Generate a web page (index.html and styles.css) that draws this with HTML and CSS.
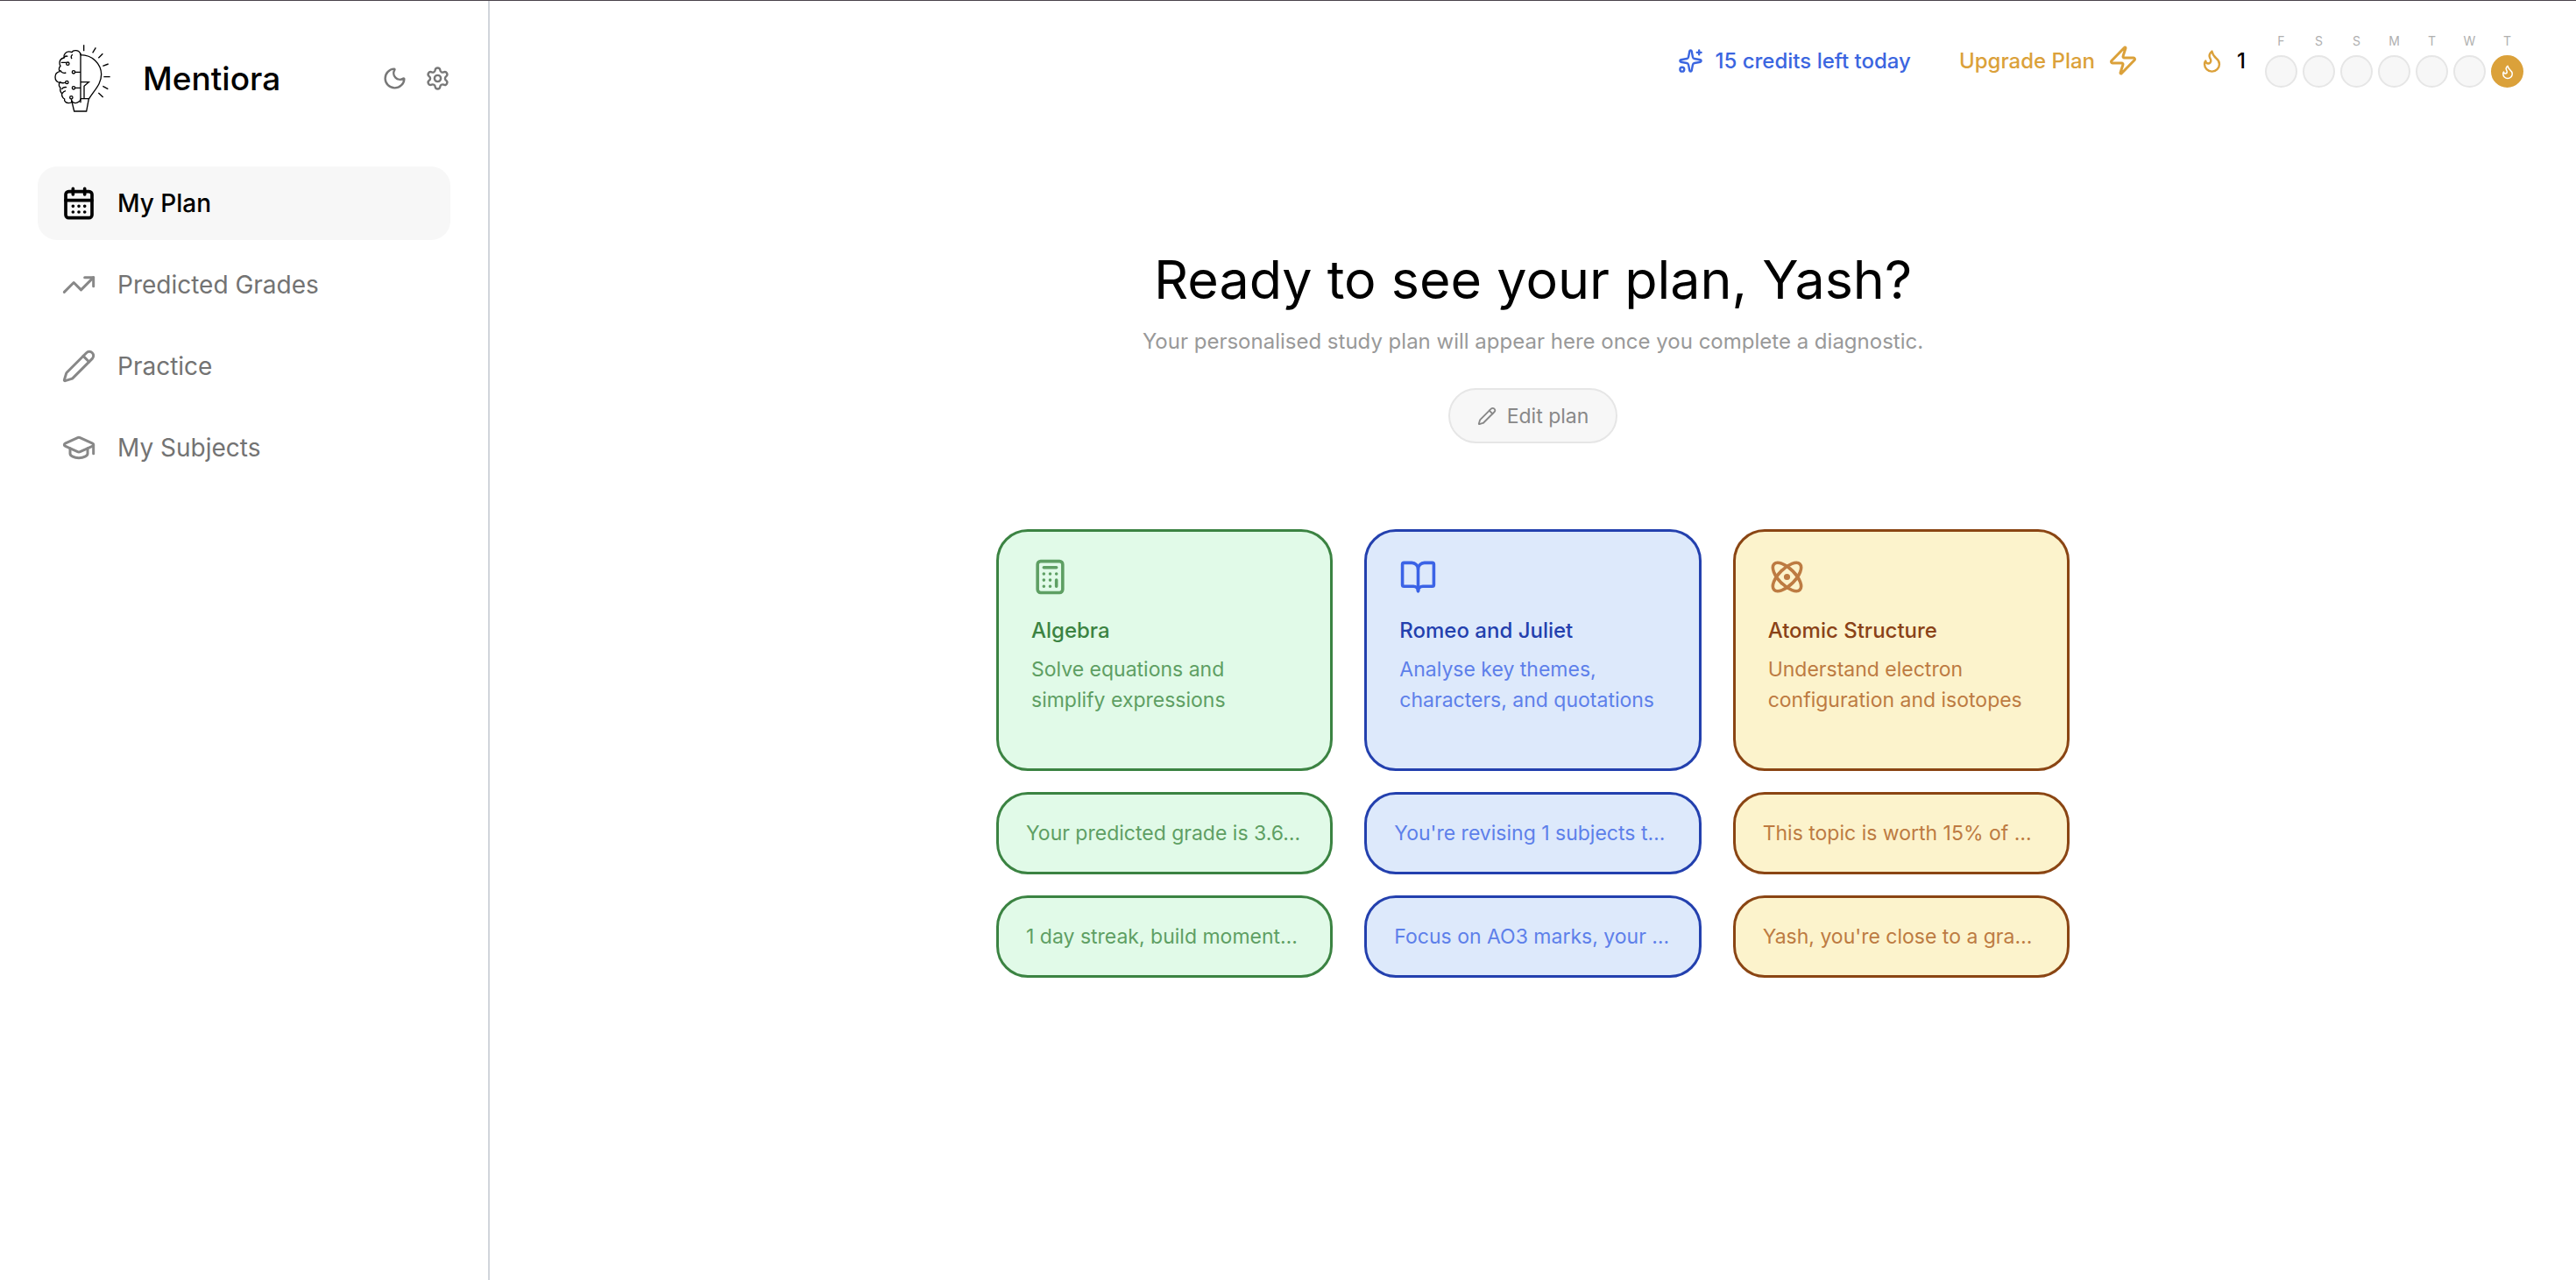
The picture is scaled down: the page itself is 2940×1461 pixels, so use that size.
FILE: index.html
```
<!DOCTYPE html>
<html lang="en">
  <head>
    <meta charset="UTF-8">
    <title>Mentiora</title>
    <link rel="stylesheet" href="styles.css">
  </head>
  <body>

    <aside class="sidebar">
      <div class="brand">
        <svg class="logo" viewBox="9 12 330 330" aria-hidden="true">
          <!-- brain half -->
          <path d="M156 98c-1-8-6-14-15-15-8-1-13 2-15 6-9-4-19-2-24 5-4 5-4 10-3 14-9 2-15 9-15 17 0 5 1 8 3 11-5 5-6 12-3 19-9 2-15 10-15 19 0 10 7 17 15 19-3 6-2 13 3 18-2 7 0 14 5 19-1 8 2 15 9 19-2 8 5 14 14 14 6 0 10-2 12-5 6 6 16 6 22 1 5-3 7-7 7-11"/>
          <path d="M89 124h18M99 108c2-5 7-7 13-5M129 97c-6 2-7 9-3 14M86 150c2 7 10 12 20 9M84 190c6 4 15 5 21 2M91 216c3-6 8-9 17-7M93 230c3-6 7-8 12-9M124 250c2 5 2 9 4 13"/>
          <circle cx="112" cy="128" r="5"/>
          <circle cx="132" cy="157" r="5"/>
          <circle cx="109" cy="192" r="5"/>
          <circle cx="132" cy="211" r="5"/>
          <circle cx="124" cy="244" r="5"/>
          <path d="M137 157h19M137 211h19"/>
          <!-- bulb half -->
          <path d="M156 92v170M156 98c40 0 70 30 71 66 0 36-26 56-42 84h-29M157 191h27l-16 14v43"/>
          <path d="M125 254l9 37h42l8-43"/>
          <!-- rays -->
          <path d="M167 64v21M208 73l-11 18M232 94l-15 15M251 129l-19 7M235 173h22M232 205l18 10M217 228l16 15"/>
        </svg>
        <span class="brand-name">Mentiora</span>
        <div class="brand-actions">
          <button type="button" class="icon-button" aria-label="Dark mode">
            <svg class="icon" viewBox="0 0 24 24"><path d="M20.985 12.486a9 9 0 1 1-9.473-9.472c.405-.022.617.46.402.803a6 6 0 0 0 8.268 8.268c.344-.215.825-.004.803.401"/></svg>
          </button>
          <button type="button" class="icon-button" aria-label="Settings">
            <svg class="icon" viewBox="0 0 24 24"><path d="M9.671 4.136a2.34 2.34 0 0 1 4.659 0 2.34 2.34 0 0 0 3.319 1.915 2.34 2.34 0 0 1 2.33 4.033 2.34 2.34 0 0 0 0 3.831 2.34 2.34 0 0 1-2.33 4.033 2.34 2.34 0 0 0-3.319 1.915 2.34 2.34 0 0 1-4.659 0 2.34 2.34 0 0 0-3.32-1.915 2.34 2.34 0 0 1-2.33-4.033 2.34 2.34 0 0 0 0-3.831A2.34 2.34 0 0 1 6.35 6.051a2.34 2.34 0 0 0 3.319-1.915"/><circle cx="12" cy="12" r="3"/></svg>
          </button>
        </div>
      </div>

      <nav class="nav">
        <a class="nav-link active" href="#">
          <svg class="icon" viewBox="0 0 24 24"><path d="M8 2v4M16 2v4"/><rect width="18" height="18" x="3" y="4" rx="2"/><path d="M3 10h18M8 14h.01M12 14h.01M16 14h.01M8 18h.01M12 18h.01M16 18h.01"/></svg>
          My Plan
        </a>
        <a class="nav-link" href="#">
          <svg class="icon" viewBox="0 0 24 24"><path d="M16 7h6v6"/><path d="m22 7-8.5 8.5-5-5L2 17"/></svg>
          Predicted Grades
        </a>
        <a class="nav-link" href="#">
          <svg class="icon" viewBox="0 0 24 24"><path d="M21.174 6.812a1 1 0 0 0-3.986-3.987L3.842 16.174a2 2 0 0 0-.5.83l-1.321 4.352a.5.5 0 0 0 .623.622l4.353-1.32a2 2 0 0 0 .83-.497z"/><path d="m15 5 4 4"/></svg>
          Practice
        </a>
        <a class="nav-link" href="#">
          <svg class="icon" viewBox="0 0 24 24"><path d="M21.42 10.922a1 1 0 0 0-.019-1.838L12.83 5.18a2 2 0 0 0-1.66 0L2.6 9.08a1 1 0 0 0 0 1.832l8.57 3.908a2 2 0 0 0 1.66 0z"/><path d="M22 10v6"/><path d="M6 12.5V16a6 3 0 0 0 12 0v-3.5"/></svg>
          My Subjects
        </a>
      </nav>
    </aside>

    <main class="content">
      <header class="topbar">
        <div class="credits">
          <svg class="icon" viewBox="0 0 24 24"><path d="M11.017 2.814a1 1 0 0 1 1.966 0l1.051 5.558a2 2 0 0 0 1.594 1.594l5.558 1.051a1 1 0 0 1 0 1.966l-5.558 1.051a2 2 0 0 0-1.594 1.594l-1.051 5.558a1 1 0 0 1-1.966 0l-1.051-5.558a2 2 0 0 0-1.594-1.594l-5.558-1.051a1 1 0 0 1 0-1.966l5.558-1.051a2 2 0 0 0 1.594-1.594z"/><path d="M20 2v4M22 4h-4"/><circle cx="4" cy="20" r="2"/></svg>
          15 credits left today
        </div>
        <a class="upgrade" href="#">
          Upgrade Plan
          <svg class="icon" viewBox="0 0 24 24"><path d="M4 14a1 1 0 0 1-.78-1.63l9.9-10.2a.5.5 0 0 1 .86.46l-1.92 6.02A1 1 0 0 0 13 10h7a1 1 0 0 1 .78 1.63l-9.9 10.2a.5.5 0 0 1-.86-.46l1.92-6.02A1 1 0 0 0 11 14z"/></svg>
        </a>
        <div class="streak">
          <svg class="icon" viewBox="0 0 24 24"><path d="M8.5 14.5A2.5 2.5 0 0 0 11 12c0-1.38-.5-2-1-3-1.072-2.143-.224-4.054 2-6 .5 2.5 2 4.9 4 6.5 2 1.6 3 3.5 3 5.5a7 7 0 1 1-14 0c0-1.153.433-2.294 1-3a2.5 2.5 0 0 0 2.5 2.5z"/></svg>
          <span class="streak-count">1</span>
          <div class="days">
            <div class="day">F<span class="dot"></span></div>
            <div class="day">S<span class="dot"></span></div>
            <div class="day">S<span class="dot"></span></div>
            <div class="day">M<span class="dot"></span></div>
            <div class="day">T<span class="dot"></span></div>
            <div class="day">W<span class="dot"></span></div>
            <div class="day">T<span class="dot done">
              <svg class="icon" viewBox="0 0 24 24"><path d="M8.5 14.5A2.5 2.5 0 0 0 11 12c0-1.38-.5-2-1-3-1.072-2.143-.224-4.054 2-6 .5 2.5 2 4.9 4 6.5 2 1.6 3 3.5 3 5.5a7 7 0 1 1-14 0c0-1.153.433-2.294 1-3a2.5 2.5 0 0 0 2.5 2.5z"/></svg>
            </span></div>
          </div>
        </div>
      </header>

      <section class="hero">
        <h1>Ready to see your plan, Yash?</h1>
        <p>Your personalised study plan will appear here once you complete a diagnostic.</p>
        <button type="button" class="edit-button">
          <svg class="icon" viewBox="0 0 24 24"><path d="M21.174 6.812a1 1 0 0 0-3.986-3.987L3.842 16.174a2 2 0 0 0-.5.83l-1.321 4.352a.5.5 0 0 0 .623.622l4.353-1.32a2 2 0 0 0 .83-.497z"/><path d="m15 5 4 4"/></svg>
          Edit plan
        </button>
      </section>

      <section class="cards">
        <article class="card green">
          <svg class="icon" viewBox="0 0 24 24"><rect width="16" height="20" x="4" y="2" rx="2"/><path d="M8 6h8M16 14v4M16 10h.01M12 10h.01M8 10h.01M12 14h.01M8 14h.01M12 18h.01M8 18h.01"/></svg>
          <h2>Algebra</h2>
          <p>Solve equations and simplify expressions</p>
        </article>
        <article class="card blue">
          <svg class="icon" viewBox="0 0 24 24"><path d="M12 7v14"/><path d="M3 18a1 1 0 0 1-1-1V4a1 1 0 0 1 1-1h5a4 4 0 0 1 4 4 4 4 0 0 1 4-4h5a1 1 0 0 1 1 1v13a1 1 0 0 1-1 1h-6a3 3 0 0 0-3 3 3 3 0 0 0-3-3z"/></svg>
          <h2>Romeo and Juliet</h2>
          <p>Analyse key themes, characters, and quotations</p>
        </article>
        <article class="card yellow">
          <svg class="icon" viewBox="0 0 24 24"><circle cx="12" cy="12" r="1"/><path d="M20.2 20.2c2.04-2.03.02-7.36-4.5-11.9-4.54-4.52-9.87-6.54-11.9-4.5-2.04 2.03-.02 7.36 4.5 11.9 4.54 4.52 9.87 6.54 11.9 4.5Z"/><path d="M15.7 15.7c4.52-4.54 6.54-9.87 4.5-11.9-2.03-2.04-7.36-.02-11.9 4.5-4.52 4.54-6.54 9.87-4.5 11.9 2.03 2.04 7.36.02 11.9-4.5Z"/></svg>
          <h2>Atomic Structure</h2>
          <p>Understand electron configuration and isotopes</p>
        </article>

        <div class="note green">Your predicted grade is 3.6…</div>
        <div class="note blue">You're revising 1 subjects t…</div>
        <div class="note yellow">This topic is worth 15% of …</div>
        <div class="note green">1 day streak, build moment…</div>
        <div class="note blue">Focus on AO3 marks, your …</div>
        <div class="note yellow">Yash, you're close to a gra…</div>
      </section>
    </main>

  </body>
</html>
```
FILE: styles.css
```
* {
  box-sizing: border-box;
  margin: 0;
  padding: 0;
}

body {
  min-height: 100vh;
  display: grid;
  grid-template-columns: 559px 1fr;
  border-top: 1px solid #4a434b;
  background-color: #ffffff;
  color: #000000;
  font-family: Inter, sans-serif;
  font-size: 24px;
}

a {
  color: inherit;
  text-decoration: none;
}

button {
  font: inherit;
  cursor: pointer;
}

.icon {
  display: block;
  flex-shrink: 0;
  width: 29px;
  height: 29px;
  fill: none;
  stroke: currentColor;
  stroke-width: 2;
  stroke-linecap: round;
  stroke-linejoin: round;
}

/* Sidebar */

.sidebar {
  border-right: 2px solid #d1d5db;
  padding: 33px 43px;
}

.brand {
  display: flex;
  align-items: center;
  margin-bottom: 46px;
}

.logo {
  width: 110px;
  height: 110px;
  margin-right: 10px;
  fill: none;
  stroke: #000000;
  stroke-width: 4;
}

.brand-name {
  font-size: 37px;
  font-weight: 500;
}

.brand-actions {
  display: flex;
  gap: 20px;
  margin-left: auto;
  color: #777777;
}

.icon-button {
  border: none;
  background: none;
  color: inherit;
}

.nav {
  display: flex;
  flex-direction: column;
  gap: 9px;
}

.nav-link {
  display: flex;
  align-items: center;
  gap: 24px;
  height: 84px;
  padding: 0 27px;
  border-radius: 22px;
  color: #737373;
  font-size: 28px;
}

.nav-link .icon {
  width: 40px;
  height: 40px;
  color: #888888;
  stroke-width: 1.8;
}

.nav-link.active {
  background-color: #f7f7f7;
  color: #000000;
  font-weight: 500;
}

.nav-link.active .icon {
  color: #000000;
  stroke-width: 2.2;
}

/* Top bar */

.content {
  padding: 37px 60px;
}

.topbar {
  display: flex;
  justify-content: flex-end;
  align-items: center;
  font-weight: 500;
}

.credits,
.upgrade,
.streak {
  display: flex;
  align-items: center;
  gap: 14px;
}

.credits {
  color: #3b66e0;
}

.upgrade {
  margin-left: 55px;
  color: #dba13a;
}

.upgrade .icon {
  width: 36px;
  height: 36px;
}

.streak {
  margin-left: 69px;
}

.streak > .icon {
  color: #dba13a;
}

.days {
  display: flex;
  gap: 6px;
  margin-left: 8px;
}

.day {
  display: flex;
  flex-direction: column;
  align-items: center;
  gap: 7px;
  color: #b0b0b0;
  font-size: 14px;
  font-weight: 400;
  line-height: 18px;
}

.dot {
  display: flex;
  align-items: center;
  justify-content: center;
  width: 37px;
  height: 37px;
  border: 2px solid #e6e6e6;
  border-radius: 50%;
  background-color: #f7f7f7;
}

.dot.done {
  border-color: #dba13a;
  background-color: #dba13a;
  color: #ffffff;
}

.dot .icon {
  width: 18px;
  height: 18px;
}

/* Hero */

.hero {
  display: flex;
  flex-direction: column;
  align-items: center;
  margin-top: 183px;
  text-align: center;
}

.hero h1 {
  font-size: 61px;
  font-weight: 400;
  line-height: 72px;
}

.hero p {
  margin-top: 17px;
  color: #999999;
  line-height: 36px;
}

.edit-button {
  display: flex;
  align-items: center;
  gap: 12px;
  height: 63px;
  margin-top: 35px;
  padding: 0 31px;
  border: 2px solid #e6e6e6;
  border-radius: 32px;
  background-color: #f7f7f7;
  color: #888888;
  font-size: 23px;
}

.edit-button .icon {
  width: 22px;
  height: 22px;
}

/* Cards */

.cards {
  display: grid;
  grid-template-columns: repeat(3, 1fr);
  gap: 24px 36px;
  max-width: 1225px;
  margin: 98px auto 0;
}

.card,
.note {
  border: 3px solid;
  border-radius: 36px;
  font-size: 23px;
}

.card {
  min-height: 276px;
  padding: 30px 37px;
}

.card .icon {
  width: 43px;
  height: 43px;
}

.card h2 {
  margin-top: 22px;
  font-size: 24px;
  font-weight: 500;
  line-height: 36px;
}

.card p {
  margin-top: 9px;
  line-height: 35px;
}

.note {
  padding: 26px 31px;
  line-height: 36px;
  white-space: nowrap;
  overflow: hidden;
  text-overflow: ellipsis;
}

.green {
  border-color: #3b8342;
  background-color: #e1fae8;
  color: #5e9f63;
}

.green h2 {
  color: #3b8342;
}

.blue {
  border-color: #2340ae;
  background-color: #dde9fb;
  color: #5d80ea;
}

.blue .icon {
  color: #3b63e6;
}

.blue h2 {
  color: #2340ae;
}

.yellow {
  border-color: #8a4513;
  background-color: #fcf3cc;
  color: #bd7b42;
}

.yellow h2 {
  color: #8a4217;
}

@media (max-width: 1500px) {
  .cards {
    grid-template-columns: 1fr;
  }
}
```
